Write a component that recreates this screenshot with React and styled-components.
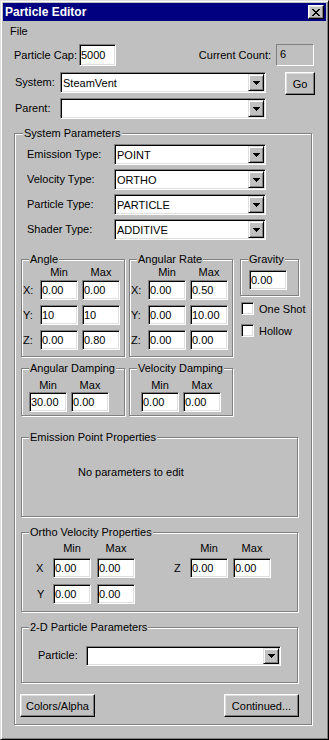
import React from 'react';
import styled, { createGlobalStyle } from 'styled-components';

const GlobalStyle = createGlobalStyle`
  html, body {
    margin: 0;
    padding: 0;
    background: #c0c0c0;
  }
  body {
    font-family: "Liberation Sans", Arial, sans-serif;
    font-size: 11px;
    color: #000;
  }
  * {
    box-sizing: border-box;
  }
`;

const Window = styled.div`
  width: 329px;
  height: 740px;
  background: #c0c0c0;
  border: 1px solid;
  border-color: #dfdfdf #000 #000 #dfdfdf;
  box-shadow: inset 1px 1px #fff, inset -1px -1px #808080;
  padding: 2px;
  display: flex;
  flex-direction: column;
`;

const TitleBar = styled.div`
  height: 18px;
  background: #000080;
  color: #fff;
  display: flex;
  align-items: center;
  padding: 0 2px 0 2px;
  font-weight: bold;
  font-size: 12px;
`;

const Raised = styled.div`
  background: #c0c0c0;
  border: 1px solid;
  border-color: #fff #000 #000 #fff;
  box-shadow: inset -1px -1px #808080, inset 1px 1px #dfdfdf;
  display: flex;
  align-items: center;
  justify-content: center;
`;

const CloseButton = styled(Raised)`
  width: 16px;
  height: 14px;
  margin-left: auto;
`;

const MenuBar = styled.div`
  height: 20px;
  display: flex;
  align-items: center;
  padding-left: 7px;
`;

const TopRow = styled.div`
  display: flex;
  align-items: center;
  height: 22px;
  margin-top: 3px;
  padding-left: 11px;
`;

const Label = styled.span`
  width: ${(p) => (p.$w ? `${p.$w}px` : 'auto')};
  margin-left: ${(p) => p.$ml || 0}px;
  margin-right: ${(p) => p.$mr || 0}px;
  white-space: nowrap;
  line-height: 13px;
`;

const Field = styled.input`
  width: ${(p) => p.$w || 38}px;
  height: ${(p) => p.$h || 20}px;
  margin: 0 0 0 ${(p) => p.$ml || 0}px;
  padding: 0 1px;
  font: inherit;
  color: #000;
  background: #fff;
  border: 1px solid;
  border-color: #808080 #fff #fff #808080;
  box-shadow: inset 1px 1px #000, inset -1px -1px #dfdfdf;
  outline: none;
  flex: none;
`;

const StaticField = styled.div`
  width: 38px;
  height: 22px;
  margin-right: 12px;
  border: 1px solid;
  border-color: #808080 #fff #fff #808080;
  padding: 1px 0 0 3px;
  line-height: 16px;
`;

const FormRow = styled.div`
  display: flex;
  align-items: ${(p) => p.$align || 'center'};
  margin-top: ${(p) => p.$mt || 0}px;
  padding-left: ${(p) => p.$pl || 0}px;
`;

const LineLabel = styled.span`
  width: ${(p) => p.$w}px;
  height: 21px;
  line-height: 21px;
  white-space: nowrap;
`;

const ComboBox = styled.div`
  width: ${(p) => p.$w}px;
  height: ${(p) => p.$h || 21}px;
  background: #fff;
  border: 1px solid;
  border-color: #808080 #fff #fff #808080;
  box-shadow: inset 1px 1px #000, inset -1px -1px #dfdfdf;
  padding: 1px;
  display: flex;
  flex: none;
`;

const ComboText = styled.span`
  flex: 1;
  padding-left: 1px;
  display: flex;
  align-items: center;
`;

const DropButton = styled.span`
  width: 16px;
  background: #c0c0c0;
  border: 1px solid;
  border-color: #dfdfdf #000 #000 #dfdfdf;
  box-shadow: inset 1px 1px #fff, inset -1px -1px #808080;
  display: flex;
  align-items: center;
  justify-content: center;
`;

const PushButton = styled(Raised)`
  width: ${(p) => p.$w}px;
  height: ${(p) => p.$h || 23}px;
  margin-left: ${(p) => p.$ml || 0}px;
`;

const Group = styled.div`
  position: relative;
  border: 1px solid #808080;
  box-shadow: inset 1px 1px #fff, 1px 1px #fff;
  width: ${(p) => p.$w}px;
  height: ${(p) => (p.$h ? `${p.$h}px` : 'auto')};
  margin-top: ${(p) => p.$mt || 0}px;
  margin-left: ${(p) => p.$ml || 0}px;
  padding: ${(p) => p.$pad || '0'};
  flex: none;
`;

const Legend = styled.span`
  position: absolute;
  top: -7px;
  left: ${(p) => p.$left || 6}px;
  background: #c0c0c0;
  padding: 0 1px;
  line-height: 13px;
  white-space: nowrap;
`;

const MainGroup = styled(Group)`
  display: flex;
  flex-direction: column;
  padding: 10px 0 7px 6px;
`;

const TypeList = styled.div`
  display: flex;
  flex-direction: column;
  gap: 4px;
  padding-left: 6px;
`;

const BoxRow = styled.div`
  display: flex;
  align-items: flex-start;
  margin-top: ${(p) => p.$mt}px;
`;

const HeadRow = styled.div`
  display: flex;
  height: 13px;
  line-height: 13px;
`;

const Spacer = styled.span`
  width: ${(p) => p.$w}px;
  flex: none;
`;

const Head = styled.span`
  width: 38px;
  margin-left: ${(p) => p.$ml || 0}px;
  text-align: center;
  flex: none;
`;

const FieldGrid = styled.div`
  display: flex;
  flex-direction: column;
  gap: ${(p) => p.$gap || 5}px;
  margin-top: ${(p) => p.$mt || 0}px;
`;

const AxisRow = styled.div`
  display: flex;
  align-items: center;
  height: 20px;
`;

const Axis = styled.span`
  width: ${(p) => p.$w || 18}px;
  margin-left: ${(p) => p.$ml || 0}px;
  padding-left: ${(p) => p.$pl || 1}px;
  flex: none;
`;

const SideColumn = styled.div`
  display: flex;
  flex-direction: column;
  margin-left: 7px;
`;

const CheckRow = styled.label`
  display: flex;
  align-items: center;
  height: 13px;
  margin-top: ${(p) => p.$mt}px;
  margin-left: 1px;
  gap: 5px;
`;

const CheckBox = styled.span`
  width: 13px;
  height: 13px;
  background: #fff;
  border: 1px solid;
  border-color: #808080 #fff #fff #808080;
  box-shadow: inset 1px 1px #000, inset -1px -1px #dfdfdf;
`;

const Note = styled.div`
  line-height: 13px;
`;

const ButtonRow = styled.div`
  display: flex;
  justify-content: space-between;
  margin-top: 11px;
  margin-left: -1px;
  width: 279px;
`;

const Arrow = () => (
  <svg width="7" height="4" viewBox="0 0 7 4" shapeRendering="crispEdges">
    <path d="M0 0h7v1H0zM1 1h5v1H1zM2 2h3v1H2zM3 3h1v1H3z" fill="#000" />
  </svg>
);

const CloseGlyph = () => (
  <svg width="8" height="7" viewBox="0 0 8 7" shapeRendering="crispEdges">
    <path
      d="M0 0h2v1H0zM6 0h2v1H6zM1 1h2v1H1zM5 1h2v1H5zM2 2h4v1H2zM3 3h2v1H3zM2 4h4v1H2zM1 5h2v1H1zM5 5h2v1H5zM0 6h2v1H0zM6 6h2v1H6z"
      fill="#000"
    />
  </svg>
);

function Combo({ w, h, value }) {
  return (
    <ComboBox $w={w} $h={h}>
      <ComboText>{value}</ComboText>
      <DropButton>
        <Arrow />
      </DropButton>
    </ComboBox>
  );
}

function MinMaxBox({ title, ml, rows, labelW = 18 }) {
  return (
    <Group $w={104} $ml={ml} $pad="6px 0 6px 0">
      <Legend $left={7}>{title}</Legend>
      <HeadRow>
        <Spacer $w={labelW} />
        <Head>Min</Head>
        <Head $ml={4}>Max</Head>
      </HeadRow>
      <FieldGrid $mt={1}>
        {rows.map(([axis, min, max]) => (
          <AxisRow key={axis}>
            <Axis $w={labelW}>{axis}</Axis>
            <Field $w={38} defaultValue={min} readOnly />
            <Field $w={38} $ml={4} defaultValue={max} readOnly />
          </AxisRow>
        ))}
      </FieldGrid>
    </Group>
  );
}

function DampingBox({ title, ml, inset, min, max }) {
  return (
    <Group $w={104} $ml={ml} $pad={`10px 0 3px ${inset}px`}>
      <Legend $left={7}>{title}</Legend>
      <HeadRow>
        <Head>Min</Head>
        <Head $ml={4}>Max</Head>
      </HeadRow>
      <AxisRow>
        <Field $w={38} defaultValue={min} readOnly />
        <Field $w={38} $ml={4} defaultValue={max} readOnly />
      </AxisRow>
    </Group>
  );
}

const types = [
  ['Emission Type:', 'POINT'],
  ['Velocity Type:', 'ORTHO'],
  ['Particle Type:', 'PARTICLE'],
  ['Shader Type:', 'ADDITIVE'],
];

export default function App() {
  return (
    <>
      <GlobalStyle />
      <Window>
        <TitleBar>
          <span>Particle Editor</span>
          <CloseButton>
            <CloseGlyph />
          </CloseButton>
        </TitleBar>
        <MenuBar>File</MenuBar>

        <TopRow>
          <Label $w={65}>Particle Cap:</Label>
          <Field $w={37} $h={22} defaultValue="5000" readOnly />
          <Label $ml={0} style={{ marginLeft: 'auto' }} $mr={5}>
            Current Count:
          </Label>
          <StaticField>6</StaticField>
        </TopRow>

        <FormRow $mt={6} $pl={12} $align="flex-start">
          <LineLabel $w={45}>System:</LineLabel>
          <Combo w={206} value="SteamVent" />
          <PushButton $w={30} $ml={19}>
            Go
          </PushButton>
        </FormRow>

        <FormRow $mt={3} $pl={12}>
          <LineLabel $w={45}>Parent:</LineLabel>
          <Combo w={206} value="" />
        </FormRow>

        <MainGroup $w={298} $mt={14} $ml={11}>
          <Legend $left={8}>System Parameters</Legend>

          <TypeList>
            {types.map(([label, value]) => (
              <FormRow key={label}>
                <LineLabel $w={87}>{label}</LineLabel>
                <Combo w={152} value={value} />
              </FormRow>
            ))}
          </TypeList>

          <BoxRow $mt={19}>
            <MinMaxBox
              title="Angle"
              rows={[
                ['X:', '0.00', '0.00'],
                ['Y:', '10', '10'],
                ['Z:', '0.00', '0.80'],
              ]}
            />
            <MinMaxBox
              title="Angular Rate"
              ml={4}
              rows={[
                ['X:', '0.00', '0.50'],
                ['Y:', '0.00', '10.00'],
                ['Z:', '0.00', '0.00'],
              ]}
            />
            <SideColumn>
              <Group $w={59} $pad="10px 0 5px 8px">
                <Legend $left={7}>Gravity</Legend>
                <Field $w={38} defaultValue="0.00" readOnly />
              </Group>
              <CheckRow $mt={6}>
                <CheckBox />
                One Shot
              </CheckRow>
              <CheckRow $mt={9}>
                <CheckBox />
                Hollow
              </CheckRow>
            </SideColumn>
          </BoxRow>

          <BoxRow $mt={11}>
            <DampingBox title="Angular Damping" inset={7} min="30.00" max="0.00" />
            <DampingBox title="Velocity Damping" ml={4} inset={11} min="0.00" max="0.00" />
          </BoxRow>

          <Group $w={277} $h={80} $mt={21} $pad="28px 0 0 56px">
            <Legend $left={7}>Emission Point Properties</Legend>
            <Note>No parameters to edit</Note>
          </Group>

          <Group $w={277} $h={80} $mt={15} $pad="9px 0 0 0">
            <Legend $left={7}>Ortho Velocity Properties</Legend>
            <HeadRow>
              <Spacer $w={31} />
              <Head>Min</Head>
              <Head $ml={6}>Max</Head>
              <Spacer $w={55} />
              <Head>Min</Head>
              <Head $ml={5}>Max</Head>
            </HeadRow>
            <FieldGrid $mt={3} $gap={6}>
              <AxisRow>
                <Axis $w={31} $pl={14}>X</Axis>
                <Field $w={38} defaultValue="0.00" readOnly />
                <Field $w={38} $ml={6} defaultValue="0.00" readOnly />
                <Axis $w={17} $ml={38} $pl={0}>Z</Axis>
                <Field $w={38} defaultValue="0.00" readOnly />
                <Field $w={38} $ml={5} defaultValue="0.00" readOnly />
              </AxisRow>
              <AxisRow>
                <Axis $w={31} $pl={15}>Y</Axis>
                <Field $w={38} defaultValue="0.00" readOnly />
                <Field $w={38} $ml={6} defaultValue="0.00" readOnly />
              </AxisRow>
            </FieldGrid>
          </Group>

          <Group $w={277} $h={56} $mt={15} $pad="17px 0 0 16px">
            <Legend $left={7}>2-D Particle Parameters</Legend>
            <FormRow>
              <LineLabel $w={48}>Particle:</LineLabel>
              <Combo w={195} h={20} value="" />
            </FormRow>
          </Group>

          <ButtonRow>
            <PushButton $w={75}>Colors/Alpha</PushButton>
            <PushButton $w={75}>Continued...</PushButton>
          </ButtonRow>
        </MainGroup>
      </Window>
    </>
  );
}
